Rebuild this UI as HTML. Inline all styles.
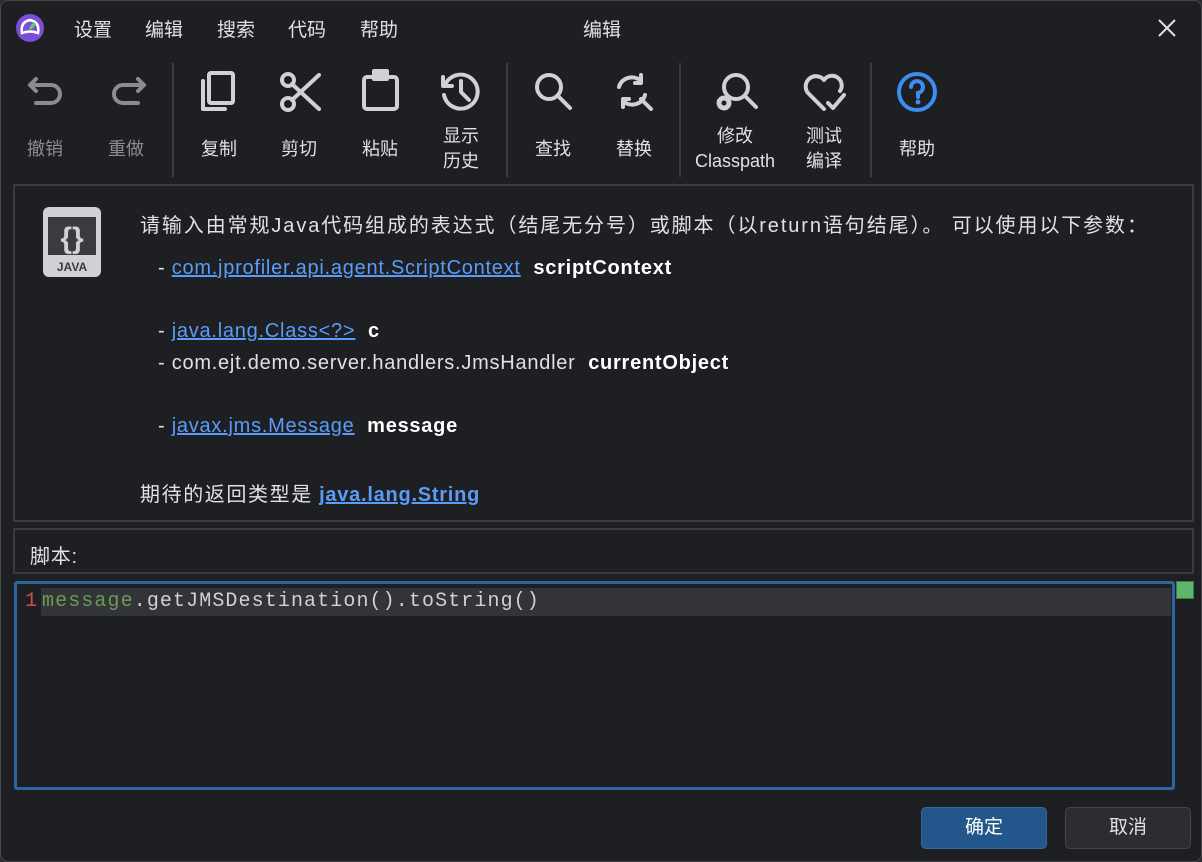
<!DOCTYPE html>
<html><head><meta charset="utf-8"><style>
*{margin:0;padding:0;box-sizing:border-box}
body{width:1202px;height:862px;background:#2b2d30;overflow:hidden;font-family:"Liberation Sans","Noto Sans CJK SC",sans-serif;color:#dfe1e5}
.win{position:absolute;left:0;top:0;width:1202px;height:862px;background:#1e1f22;border:1px solid #45474a;border-radius:8px}
.a{position:absolute;white-space:nowrap}
.menu{top:14px;font-size:19px;color:#dfe1e5}
.lbl{font-size:18px;color:#dfe1e5;text-align:center;line-height:25px}
.dis{color:#8a8c90}
.sep{position:absolute;top:62px;width:2px;height:114px;background:#393b40}
svg.i{position:absolute;fill:none;stroke:#cfd1d5;stroke-width:4;stroke-linecap:round;stroke-linejoin:round}
.panel{position:absolute;border:2px solid #393b40}
.t{font-size:20px;letter-spacing:0.75px;color:#dfe1e5}
a{color:#5a9cf8;text-decoration:underline}
b{color:#fff}
.btn{position:absolute;top:806px;width:126px;height:42px;border-radius:5px;font-size:19px;text-align:center;line-height:40px}
.code{font-family:'Liberation Mono',monospace;font-size:20px;letter-spacing:1.1px}
</style></head><body><div class="win">
<svg style="position:absolute;left:14px;top:12px" width="30" height="30" viewBox="0 0 30 30"><circle cx="15" cy="15" r="14" fill="#7a4fd8"/><path d="M7 20 Q5 9 15 7 Q25 9 23 20 Q15 17 7 20Z" fill="none" stroke="#fff" stroke-width="2.5"/><path d="M15 16 L20 10" stroke="#5fd35a" stroke-width="3"/></svg>
<div class="a menu" style="left:73px">设置</div>
<div class="a menu" style="left:144px">编辑</div>
<div class="a menu" style="left:216px">搜索</div>
<div class="a menu" style="left:287px">代码</div>
<div class="a menu" style="left:359px">帮助</div>
<div class="a menu" style="left:582px">编辑</div>
<svg style="position:absolute;left:1156px;top:17px" width="20" height="20" viewBox="0 0 20 20"><path d="M2 2L18 18M18 2L2 18" stroke="#dfe1e5" stroke-width="2"/></svg>

<svg class="i" style="left:26px;top:72px;stroke:#8a8c90" width="40" height="40" viewBox="0 0 40 40"><path d="M9 6L3 12L9 18M3 12H24A9 9 0 0 1 24 30H9"/></svg>
<svg class="i" style="left:106px;top:72px;stroke:#8a8c90" width="40" height="40" viewBox="0 0 40 40"><path d="M31 6L37 12L31 18M37 12H16A9 9 0 0 0 16 30H31"/></svg>
<svg class="i" style="left:198px;top:70px" width="40" height="42" viewBox="0 0 40 42"><rect x="10" y="2" width="24" height="30" rx="2"/><path d="M4 10V38H26"/></svg>
<svg class="i" style="left:278px;top:70px" width="42" height="42" viewBox="0 0 42 42"><circle cx="9" cy="9" r="6"/><circle cx="9" cy="33" r="6"/><path d="M13 13L40 38M13 29L40 4"/></svg>
<svg class="i" style="left:360px;top:68px" width="40" height="42" viewBox="0 0 40 42"><rect x="3" y="8" width="33" height="32" rx="3"/><rect x="13" y="2" width="13" height="8" fill="#cfd1d5"/></svg>
<svg class="i" style="left:440px;top:70px" width="40" height="42" viewBox="0 0 40 42"><path d="M4 14A17 17 0 1 1 3 24"/><path d="M2 6V15H11" /><path d="M20 10V21L28 29"/></svg>
<svg class="i" style="left:532px;top:70px" width="40" height="42" viewBox="0 0 40 42"><circle cx="16" cy="16" r="12"/><path d="M25 25L37 37"/></svg>
<svg class="i" style="left:614px;top:72px" width="40" height="40" viewBox="0 0 40 40"><path d="M4 14A13 12 0 0 1 26 8M30 22A13 12 0 0 1 8 28"/><path d="M26 2V10H20M8 34V26H14" /><path d="M26 26L36 36"/></svg>
<svg class="i" style="left:713px;top:70px" width="44" height="42" viewBox="0 0 44 42"><circle cx="22" cy="16" r="12"/><path d="M31 25L42 36"/><circle cx="10" cy="32" r="5" stroke-width="5" stroke-dasharray="3 2"/></svg>
<svg class="i" style="left:801px;top:72px" width="46" height="40" viewBox="0 0 46 40"><path d="M22 36L6 20A9 9 0 0 1 22 7A9 9 0 0 1 38 18"/><path d="M26 30L31 35L42 22"/></svg>
<svg style="position:absolute;left:895px;top:70px" width="42" height="42" viewBox="0 0 42 42"><circle cx="21" cy="21" r="18" fill="none" stroke="#3b8df0" stroke-width="4"/><path d="M15 16A6 6 0 1 1 22 22V26" fill="none" stroke="#3b8df0" stroke-width="4" stroke-linecap="round"/><circle cx="22" cy="31" r="2.5" fill="#3b8df0"/></svg>

<div class="sep" style="left:171px"></div><div class="sep" style="left:505px"></div><div class="sep" style="left:678px"></div><div class="sep" style="left:869px"></div>
<div class="a lbl dis" style="left:26px;top:136px">撤销</div>
<div class="a lbl dis" style="left:107px;top:136px">重做</div>
<div class="a lbl" style="left:200px;top:136px">复制</div>
<div class="a lbl" style="left:280px;top:136px">剪切</div>
<div class="a lbl" style="left:361px;top:136px">粘贴</div>
<div class="a lbl" style="left:442px;top:123px">显示<br>历史</div>
<div class="a lbl" style="left:534px;top:136px">查找</div>
<div class="a lbl" style="left:615px;top:136px">替换</div>
<div class="a lbl" style="left:694px;top:123px">修改<br>Classpath</div>
<div class="a lbl" style="left:805px;top:123px">测试<br>编译</div>
<div class="a lbl" style="left:898px;top:136px">帮助</div>

<div class="panel" style="left:12px;top:183px;width:1181px;height:338px"></div>
<svg style="position:absolute;left:42px;top:206px" width="58" height="70" viewBox="0 0 58 70"><rect x="0" y="0" width="58" height="70" rx="6" fill="#cfd1d5"/><rect x="5" y="10" width="48" height="38" fill="#3a3b3e"/><text x="29" y="41" font-size="30" font-weight="bold" fill="#cfd1d5" text-anchor="middle" font-family="Liberation Sans">{}</text><text x="29" y="64" font-size="12" font-weight="bold" fill="#3a3b3e" text-anchor="middle" font-family="Liberation Sans">JAVA</text></svg>
<div class="a t" style="left:139px;top:208px;letter-spacing:1.9px">请输入由常规Java代码组成的表达式（结尾无分号）或脚本（以return语句结尾）。 可以使用以下参数：</div>
<div class="a t" style="left:157px;top:256px">- <a>com.jprofiler.api.agent.ScriptContext</a>&nbsp; <b>scriptContext</b></div>
<div class="a t" style="left:157px;top:319px">- <a>java.lang.Class&lt;?&gt;</a>&nbsp; <b>c</b></div>
<div class="a t" style="left:157px;top:351px">- com.ejt.demo.server.handlers.JmsHandler&nbsp; <b>currentObject</b></div>
<div class="a t" style="left:157px;top:414px">- <a>javax.jms.Message</a>&nbsp; <b>message</b></div>
<div class="a t" style="left:139px;top:477px"><span style="letter-spacing:1.6px">期待的返回类型是</span> <a style="font-weight:bold">java.lang.String</a></div>

<div class="panel" style="left:12px;top:527px;width:1181px;height:46px"></div>
<div class="a t" style="left:29px;top:539px">脚本:</div>

<div style="position:absolute;left:13px;top:580px;width:1161px;height:209px;border:3px solid #2d65a0;border-radius:3px;background:#1e1f22"></div>
<div style="position:absolute;left:40px;top:587px;width:1130px;height:28px;background:#333437"></div>
<div class="a code" style="left:24px;top:589px;color:#c9504f">1</div>
<div class="a code" style="left:41px;top:589px;color:#cfd1d5"><span style="color:#6a9955">message</span>.getJMSDestination().toString()</div>
<div style="position:absolute;left:1175px;top:580px;width:18px;height:18px;background:#5fb56b;border:1px solid #3d7a46"></div>

<div class="btn" style="left:920px;background:#23568a;border:1px solid #2f6aa6;color:#fff">确定</div>
<div class="btn" style="left:1064px;background:#2b2d30;border:1px solid #43454a">取消</div>
</div></body></html>
